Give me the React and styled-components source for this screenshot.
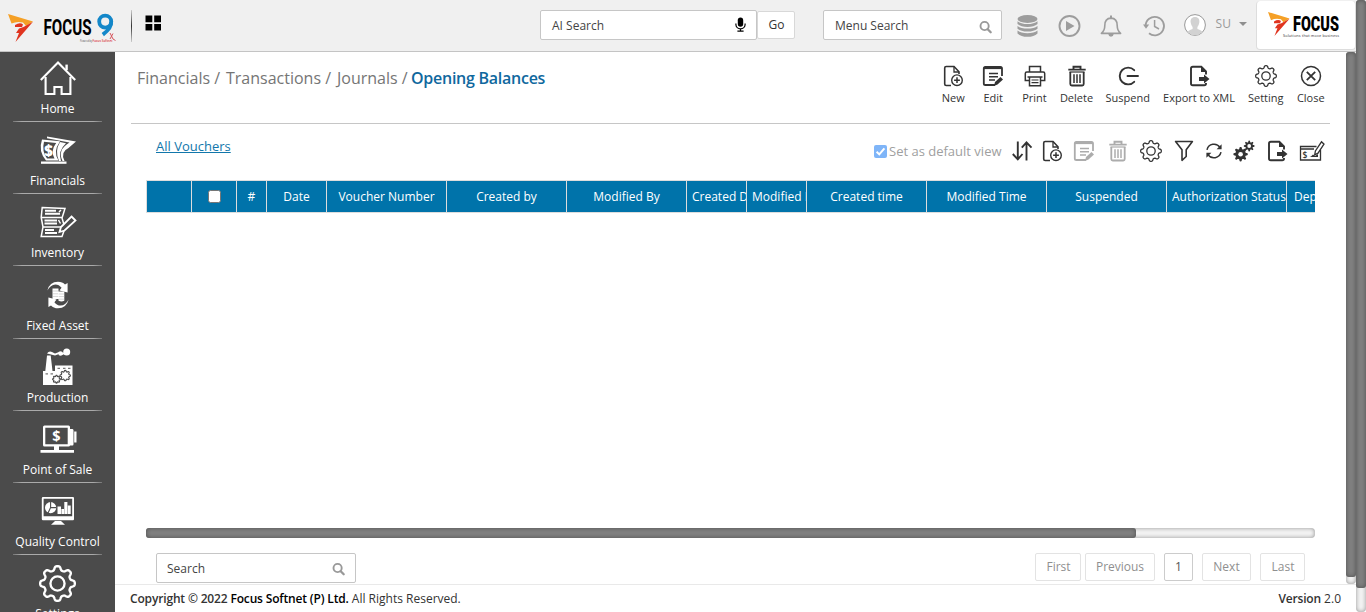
import React from "react";
import styled, { createGlobalStyle, css } from "styled-components";

const GlobalStyle = createGlobalStyle`
  *, *::before, *::after { box-sizing: border-box; }
  html, body { margin: 0; height: 100%; overflow: hidden; }
  body { font-family: "Open Sans", sans-serif; font-size: 12px; color: #333; background: #fff; }
  svg { display: block; overflow: visible; }
`;

/* ---------- icons ---------- */

const Icon = ({ w = 22, h = 22, children, ...rest }) => (
  <svg width={w} height={h} viewBox={`0 0 ${w} ${h}`} fill="none" stroke="currentColor" strokeWidth="1.6" {...rest}>
    {children}
  </svg>
);

/* Closed wavy outline with rounded teeth, sampled around the circle. */
const gearPath = (cx, cy, outer, inner, teeth, sharpness = 1.8) => {
  const mid = (outer + inner) / 2;
  const amp = (outer - inner) / 2 / Math.tanh(sharpness);
  const pts = [];
  for (let i = 0; i < 160; i++) {
    const a = (i * 2 * Math.PI) / 160;
    const r = mid + amp * Math.tanh(sharpness * Math.cos(teeth * a));
    pts.push(`${(cx + r * Math.sin(a)).toFixed(2)} ${(cy - r * Math.cos(a)).toFixed(2)}`);
  }
  return `M${pts.join("L")}Z`;
};

const NewIcon = () => (
  <Icon>
    <path d="M9 20.5H4.2Q2.7 20.5 2.7 19V3Q2.7 1.5 4.2 1.5H12L17 6.8V9" />
    <path d="M12 1.8V7H17" strokeWidth="1.3" />
    <circle cx="15" cy="15.2" r="5.3" strokeWidth="1.4" />
    <path d="M15 12.3V18.1M12.1 15.2H17.9" strokeWidth="1.5" />
  </Icon>
);
const EditIcon = () => (
  <Icon>
    <path d="M13 20H3.4Q1.8 20 1.8 18.4V3.4Q1.8 1.8 3.4 1.8H18.4Q20 1.8 20 3.4V11" strokeWidth="1.8" />
    <path d="M1.8 3H20" strokeWidth="2.2" />
    <path d="M7 8.4H16M7 11.7H16M7 15H13" strokeWidth="1.5" />
    <path d="M13 17L18.5 12L21 14.4L15.5 19.6L12 21Z" fill="currentColor" stroke="none" />
  </Icon>
);
const PrintIcon = () => (
  <Icon strokeWidth="1.5">
    <path d="M5.5 7V1.5H16.5V7M5.5 15.5H1.3V8.5Q1.3 7 2.8 7H19.2Q20.7 7 20.7 8.5V15.5H16.5" />
    <path d="M5.5 12H16.5V20.7H5.5ZM3.5 12H18.5" />
    <path d="M7.5 15H14.5M7.5 17.7H14.5" strokeWidth="1.2" />
  </Icon>
);
const TrashIcon = () => (
  <Icon>
    <path d="M2.3 4.6H19.7M7.5 4V1.8H14.5V4" strokeWidth="1.9" />
    <path d="M4.3 7V19Q4.3 20.5 5.8 20.5H16.2Q17.7 20.5 17.7 19V7" strokeWidth="1.8" />
    <path d="M3.5 7H18.5" strokeWidth="1.2" />
    <path d="M8 9.2V18M11 9.2V18M14 9.2V18" strokeWidth="1.5" />
  </Icon>
);
const SuspendIcon = () => (
  <Icon>
    <path d="M17.2 5.2A8.4 8.4 0 1 0 17.2 16.8M10.5 11H21" strokeWidth="1.9" strokeLinecap="round" />
  </Icon>
);
const ExportIcon = () => (
  <Icon strokeWidth="1.9">
    <path d="M18 9.5V6.3L13.3 1.7H4.8Q3 1.7 3 3.5V18.5Q3 20.3 4.8 20.3H16.2Q18 20.3 18 18.5V18" />
    <path d="M13 1.5L18.5 7H13Z" fill="currentColor" stroke="none" />
    <path d="M11 12H16V9.6L21.5 14L16 18.4V16H11Z" fill="currentColor" stroke="none" />
  </Icon>
);
const GearIcon = ({ size = 22, sw = 1.3 }) => (
  <svg width={size} height={size} viewBox="0 0 22 22" fill="none" stroke="currentColor" strokeWidth={sw} strokeLinejoin="round">
    <path d={gearPath(11, 11, 10.3, 8, 8)} />
    <circle cx="11" cy="11" r="4.2" />
  </svg>
);
const CloseIcon = () => (
  <Icon>
    <circle cx="11" cy="11" r="9.5" strokeWidth="1.5" />
    <path d="M6.8 6.8L15.2 15.2M15.2 6.8L6.8 15.2" strokeWidth="1.8" />
  </Icon>
);
const SortIcon = () => (
  <Icon strokeWidth="1.9">
    <path d="M6.8 1.5V19M1.8 14L6.8 19.4L11.5 14M15.5 20.5V3M10.8 7.6L15.5 2.4L20.5 7.6" />
  </Icon>
);
const FilterIcon = () => (
  <Icon strokeWidth="1.6" strokeLinejoin="round">
    <path d="M2.6 1.5H19.4L13.2 9.8V16.5L9 20.3V9.8Z" />
  </Icon>
);
const RefreshIcon = () => (
  <Icon strokeWidth="1.5">
    <path d="M4 9.8A7.2 7.2 0 0 1 17 7.4M18 12.2A7.2 7.2 0 0 1 5 14.6" />
    <path d="M18.6 4.2V9.2H13.6ZM3.4 17.8V12.8H8.4Z" fill="currentColor" stroke="none" />
  </Icon>
);
const GearsIcon = () => (
  <Icon stroke="none">
    <path d={gearPath(7.6, 14.2, 7.2, 5.2, 8)} fill="currentColor" />
    <circle cx="7.6" cy="14.2" r="2.3" fill="#fff" />
    <path d={gearPath(16.2, 6, 5.4, 3.8, 8)} fill="currentColor" />
    <circle cx="16.2" cy="6" r="1.9" fill="#fff" />
  </Icon>
);
const ChequeIcon = () => (
  <Icon w={26} strokeWidth="1.3">
    <path d="M17.5 6.5H1.5V20H21.5V10M1.5 9H15" />
    <path d="M22.5 1.8L25 4.2L19 13.2L15.7 14.8L16.4 11Z" strokeWidth="1.3" />
    <path d="M12 16.4L14 14.5L16 16L19 14V17H10.5Z" fill="currentColor" stroke="none" />
    <text x="3.6" y="18.2" fontSize="8.5" fontWeight="600" fill="currentColor" stroke="none">$</text>
  </Icon>
);
const SearchIcon = () => (
  <Icon w={13} h={13}>
    <circle cx="5.6" cy="5" r="4.1" strokeWidth="1.9" />
    <path d="M8.7 8.2L11.7 11.2" strokeWidth="2.3" strokeLinecap="round" />
  </Icon>
);
const MicIcon = () => (
  <Icon w={11} h={15}>
    <rect x="2.8" y="-0.4" width="5.4" height="9.2" rx="2.7" fill="#000" stroke="none" />
    <path d="M0.9 5.4V6.6A4.6 4.3 0 0 0 10.1 6.6V5.4M5.5 11V13M2.4 13.2H8.6" stroke="#000" strokeWidth="1.2" />
  </Icon>
);
const TilesIcon = () => (
  <Icon w={16} h={16} stroke="none" fill="#000">
    <path d="M0.5 0.5H7.3V7.2H0.5ZM9.2 0.5H16V7.2H9.2ZM0.5 9H7.3V15.4H0.5ZM9.2 9H16V15.4H9.2Z" />
  </Icon>
);
const DatabaseIcon = () => (
  <Icon w={21} h={22} stroke="none" fill="currentColor">
    <ellipse cx="10.5" cy="4" rx="10" ry="3.9" />
    <path d="M.5 6.2Q4 9 10.5 9T20.5 6.2V9Q17 12 10.5 12T.5 9ZM.5 11Q4 13.6 10.5 13.6T20.5 11V13.8Q17 16.6 10.5 16.6T.5 13.8ZM.5 15.6Q4 18.2 10.5 18.2T20.5 15.6V18.4Q17 21.8 10.5 21.8T.5 18.4Z" />
  </Icon>
);
const PlayIcon = () => (
  <Icon>
    <circle cx="11.5" cy="11" r="10" strokeWidth="1.9" />
    <path d="M8 6L16.5 11L8 16Z" fill="currentColor" stroke="none" />
  </Icon>
);
const BellIcon = () => (
  <Icon>
    <path d="M1.4 18.4Q4.8 15.5 4.8 10.5Q4.8 3.3 11 3.1Q17.2 3.3 17.2 10.5Q17.2 15.5 20.6 18.4Z" strokeWidth="1.6" strokeLinejoin="round" />
    <path d="M10 .5H12V3H10ZM8.3 19H13.7Q13.4 21.7 11 21.7T8.3 19Z" fill="currentColor" stroke="none" />
  </Icon>
);
const HistoryIcon = () => (
  <Icon>
    <path d="M2.6 11A9.2 9.2 0 1 1 6 18.2" strokeWidth="1.8" />
    <path d="M0 9.5H6.2L3 13.8Z" fill="currentColor" stroke="none" />
    <path d="M11.6 5V11.5L16 14" strokeWidth="1.5" />
  </Icon>
);
const AvatarIcon = () => (
  <Icon stroke="none">
    <circle cx="11" cy="11" r="10.4" fill="#fff" stroke="#999" strokeWidth="1" />
    <path d="M11 3C14.4 3 15.8 5.3 15.3 8.6C15 11 14 12.2 13.4 13V15Q18 16.2 18.2 18.2A10 10 0 0 1 3.8 18.2Q4 16.2 8.6 15V13C8 12.2 7 11 6.7 8.6C6.2 5.3 7.6 3 11 3Z" fill="#d2d2d2" />
  </Icon>
);

const FlagMark = () => (
  <>
    <path d="M0 0L25 7.5L18 12L15 8.5Q9 7 3.5 9.5Z" fill="#f5a026" />
    <path d="M7 11Q12 8 15 10.5L14 13H7ZM15.5 13L25 7.8L7.5 28L11 19H8L11 14.5Z" fill="#e0341f" />
  </>
);

const BrandLogo = () => (
  <svg width="108" height="30" viewBox="0 0 108 30">
    <FlagMark />
    <text x="35.5" y="21" textLength="48" lengthAdjust="spacingAndGlyphs" fontFamily="Roboto, sans-serif" fontWeight="700" fontSize="22.5" fill="#000">FOCUS</text>
    <g fill="none" stroke="#1387c9" strokeWidth="3.8">
      <circle cx="97.2" cy="7.6" r="6" />
      <path d="M103.2 7.5Q103.8 14 94.8 20.6" />
    </g>
    <path d="M102 19L105 25L107.5 26.5M105 19.5L102 25" stroke="#d6545c" strokeWidth="1" fill="none" />
    <text x="72" y="27.8" fontSize="3" fill="#444" textLength="12" lengthAdjust="spacingAndGlyphs">Powered by</text>
    <text x="84.5" y="28" fontSize="3.8" fontWeight="600" fill="#d9333f" textLength="20" lengthAdjust="spacingAndGlyphs">Focus Softnet</text>
  </svg>
);
const CompanyLogo = () => (
  <svg width="72" height="26" viewBox="0 0 72 26">
    <g transform="scale(.86 .86)"><FlagMark /></g>
    <text x="25" y="19.4" textLength="46" lengthAdjust="spacingAndGlyphs" fontFamily="Roboto, sans-serif" fontWeight="900" fontSize="21" fill="#000">FOCUS</text>
    <text x="15" y="24.8" fontSize="3.8" fill="#333" textLength="56" lengthAdjust="spacing">Solutions that move business</text>
  </svg>
);

const HomeIcon = () => (
  <Icon w={36} h={34} strokeWidth="2.1">
    <path d="M.8 19L18 1.6L35.2 19" />
    <path d="M26.6 9V3.6" strokeWidth="2.4" />
    <path d="M5.6 16V33H14.4V26H21.6V33H30.4V16" />
  </Icon>
);
const FinancialsIcon = () => (
  <Icon w={36} h={34} stroke="none" fill="currentColor">
    <path d="M2 6.5L20 8.2Q12.5 19 18.5 27.5H6Q-2 18 2 6.5ZM4 8.8Q1.6 18 7 25.6H14.5Q10.3 17.5 16.2 10Z" fillRule="evenodd" />
    <path d="M1 28.5H26.5V30.8H1Z" />
    <path d="M7 3.5L36 8.5L28.5 15Q20 19 24.5 28H22.5Q17 17 29.5 9.6L7 5.2Z" />
    <path d="M20 9L26 10.2Q17.5 18 21 28H19Q14.5 18 20 9Z" />
    <text x="4.2" y="22.6" fontSize="15" fontWeight="800">$</text>
  </Icon>
);
const InventoryIcon = () => (
  <Icon w={36} h={34} strokeWidth="1.5">
    <path d="M2.2 2.5L25 3.5L22 13L25 23L22 31.5H1.2L3 22L1.2 12.5ZM1.2 12.5H22M3 22H22" />
    <path d="M5 5.8H16M5 8.8H20M4.5 15.5H17M4.5 18.5H17M5 25H14M5 28H17" strokeWidth="2" />
    <path d="M31.5 11.5L35.5 15.5L24.5 25.5L19.5 27L21 22Z" fill="#4b4b4b" strokeWidth="1.8" />
    <path d="M19 7L21 5M18.5 15L20.5 18.5" />
  </Icon>
);
const FixedAssetIcon = () => (
  <Icon w={24} h={28} stroke="none" fill="currentColor">
    <path d="M1.4 9.5Q3.5 .8 12 .8Q16.5 .8 19 3.6L21.6 2V11.6L13.4 9.4L15.6 6.8Q13 3.4 9.4 3.4Q4.4 3.6 1.4 9.5Z" />
    <path d="M22.6 18.5Q20.5 27.2 12 27.2Q7.5 27.2 5 24.4L2.4 26V16.4L10.6 18.6L8.4 21.2Q11 24.6 14.6 24.6Q19.6 24.4 22.6 18.5Z" />
    <path d="M6.5 7.5H12.5V10.5H18.3V19.8Q15.5 21.4 12.5 19.8V18H6.5Z" />
    <path d="M6.5 10H12M6.5 12.8H12M6.5 15.4H12M12.6 13H18.3M12.6 15.6H18.3M12.6 18.2H18.3" stroke="#a8a8a8" strokeWidth=".5" />
  </Icon>
);
const ProductionIcon = () => (
  <Icon w={30} h={38} stroke="none" fill="currentColor">
    <path d="M0 37V23H2.3L4 7.5H7.7L9.5 23H12V17.5H29.5V37Z" />
    <path d="M4 5.5Q6 2.5 9 4L12 5.5L16 4L20 4.5L21.5 5.2L20 7L16 6L12 7.5L8 6.5Z" />
    <circle cx="23.7" cy="4" r="3.5" />
    <circle cx="17.5" cy="5.5" r="2.2" />
    <path d="M14.5 20.3H17M20 20.3H22.5M25 20.3H27.5M2.5 25.8H5M7.5 25.8H10" stroke="#777" strokeWidth="1.2" />
    <g fill="none" stroke="#4b4b4b" strokeWidth="1.1">
      <path d={gearPath(22.2, 27.6, 5.2, 3.9, 8)} />
      <path d={gearPath(13.5, 31.2, 3.9, 2.9, 8)} />
    </g>
  </Icon>
);
const PosIcon = () => (
  <Icon w={36} h={28} stroke="none" fill="currentColor">
    <path d="M4.5 .5Q3 .5 3 2V20Q3 21.5 4.5 21.5H14V25H.5V27.8H34V25H19V21.5H28.5Q30 21.5 30 20V2Q30 .5 28.5 .5ZM5.3 2.7H27.7V19.3H5.3Z" fillRule="evenodd" />
    <path d="M29 4H32.5Q33.5 4 33.5 5.5V19Q33.5 20.5 32.5 20.5H29ZM34.2 6.5H36.5V17.5H34.2Z" />
    <text x="12.2" y="16.4" fontSize="14.5" fontWeight="700">$</text>
  </Icon>
);
const QualityIcon = () => (
  <Icon w={34} h={28} stroke="none" fill="currentColor">
    <path d="M2 0H32Q33 0 33 1.3V22Q33 23.2 32 23.2H2Q.8 23.2 .8 22V1.3Q.8 0 2 0ZM2.6 1.8V19.3H31.2V1.8Z" fillRule="evenodd" />
    <path d="M14 24H20L24 27.8H10Z" />
    <circle cx="9.6" cy="10.6" r="5.6" />
    <path d="M9.6 5V10.6H15.4M9.6 10.6L7 16" stroke="#4b4b4b" strokeWidth="1.1" fill="none" />
    <path d="M16.5 9.5H20V17H16.5ZM20.4 12H23V17H20.4ZM23.3 5H26.4V17H23.3ZM26.8 8.5H29.7V17H26.8Z" />
  </Icon>
);

/* ---------- frame ---------- */

const Frame = styled.div`
  display: flex;
  width: 1366px;
  height: 612px;
  overflow: hidden;
`;
const Shell = styled.div`
  display: flex;
  flex-direction: column;
  width: 1356px;
`;
const Track = styled.div`
  flex: none;
  border-radius: 4px;
  background: #f2f2f2;
  box-shadow: inset 0 0 4px rgba(0, 0, 0, 0.4);
  ${(p) => (p.$horizontal
    ? css`width: 1169px; height: 10px; margin-left: 31px;`
    : css`width: 10px; height: 100%;`)}
`;
const Thumb = styled.div`
  border-radius: 3px;
  background: #828282;
  box-shadow: inset 0 0 5px rgba(0, 0, 0, 0.4);
  ${(p) => (p.$horizontal
    ? css`width: ${p.$size}px; height: 10px;`
    : css`width: 10px; height: ${p.$size}px;`)}
`;

/* ---------- top bar ---------- */

const TopBar = styled.header`
  display: flex;
  align-items: flex-start;
  flex: none;
  height: 52px;
  background: #f0f0f0;
  border-bottom: 1px solid #c4c4c4;
`;
const BrandArea = styled.div`
  display: flex;
  width: 540px;
  padding: 14px 0 0 8px;
`;
const Divider = styled.div`
  width: 1px;
  height: 32px;
  margin: -4px 13px 0 15px;
  background: linear-gradient(#ccc, #333 50%, #ccc);
`;
const TilesButton = styled.div`
  padding-top: 1px;
`;
const SearchBox = styled.label`
  display: flex;
  align-items: center;
  justify-content: space-between;
  width: ${(p) => p.$width}px;
  height: 30px;
  padding: 0 ${(p) => p.$right || 10}px 0 ${(p) => p.$left || 10}px;
  border: 1px solid #c6c6c6;
  border-radius: 2px;
  background: #fff;
  color: #444;
  font-size: 12px;
  margin-top: ${(p) => p.$top || 0}px;
`;
const SearchGlyph = styled.span`
  color: #999;
  padding-top: ${(p) => p.$drop || 0}px;
`;
const GoButton = styled.div`
  width: 38px;
  height: 28px;
  margin: 11px 28px 0 0;
  padding-left: 1px;
  border: 1px solid #d8d8d8;
  border-radius: 2px;
  background: #fff;
  text-align: center;
  line-height: 26px;
  color: #333;
`;
const TopIcons = styled.div`
  display: flex;
  align-items: center;
  gap: 20.2px;
  height: 52px;
  padding-left: 15px;
  color: #9d9d9d;
`;
const User = styled.div`
  display: flex;
  align-items: center;
  height: 50px;
  margin-left: 19px;
  color: #8a8a8a;
`;
const UserName = styled.span`
  margin: -3px 8px 0 10px;
  font-size: 12px;
  color: #999;
`;
const Caret = styled.span`
  border: 4px solid transparent;
  border-top-color: #8f8f8f;
  border-bottom: 0;
  margin-top: -2px;
`;
const LogoCard = styled.div`
  width: 100px;
  height: 49px;
  margin: 1px 0 0 auto;
  padding: 11px 0 0 11px;
  border: 1px solid #ddd;
  border-top: 0;
  border-radius: 4px;
  background: #fff;
`;

/* ---------- sidebar ---------- */

const Body = styled.div`
  display: flex;
  height: 560px;
`;
const Sidebar = styled.nav`
  flex: none;
  width: 115px;
  height: 560px;
  overflow: hidden;
  background: #4b4b4b;
  color: #fff;
`;
const NavItem = styled.div`
  height: 72.2px;
  display: flex;
  flex-direction: column;
  align-items: center;
`;
const NavIcon = styled.div`
  display: flex;
  align-items: center;
  justify-content: center;
  height: 38px;
  margin-top: 7px;
`;
const NavLabel = styled.div`
  height: 17px;
  margin-top: 3px;
  font-size: 12px;
  line-height: 17px;
  white-space: nowrap;
`;
const NavRule = styled.div`
  width: 89px;
  height: 1px;
  margin-top: 4px;
  background: linear-gradient(90deg, #777, #aaa 10%, #aaa 90%, #777);
`;

/* ---------- workspace ---------- */

const Content = styled.div`
  display: flex;
  flex-direction: column;
  width: 1241px;
`;
const Viewport = styled.div`
  display: flex;
  height: 532px;
`;
const Workspace = styled.main`
  width: 1231px;
`;
const PageHead = styled.div`
  display: flex;
  justify-content: space-between;
  height: 72px;
  margin: 0 16px;
  border-bottom: 1px solid #c6c6c6;
`;
const Crumbs = styled.div`
  display: flex;
  padding: 15px 0 0 6px;
  font-size: 16px;
  line-height: 22px;
  color: #757575;
  white-space: nowrap;
`;
const Crumb = styled.span`
  width: ${(p) => p.$width}px;
`;
const CurrentCrumb = styled.span`
  color: #0f689e;
  font-weight: 600;
  letter-spacing: -0.26px;
`;
const ActionBar = styled.div`
  display: flex;
  padding-top: 13px;
  margin-right: -0.5px;
`;
const Action = styled.div`
  display: flex;
  flex-direction: column;
  align-items: center;
  width: ${(p) => p.$width}px;
  color: #333;
  font-size: 11px;
  line-height: 16px;
  white-space: nowrap;
  opacity: ${(p) => (p.$muted ? 0.4 : 1)};
`;
const ActionLabel = styled.span`
  margin-top: 3px;
`;
const ListHead = styled.div`
  display: flex;
  justify-content: space-between;
  height: 56px;
  padding: 0 15px 0 41px;
`;
const ViewLink = styled.a`
  padding-top: 13px;
  font-size: 13px;
  line-height: 18px;
  color: #1277ab;
  text-decoration: underline;
`;
const ListTools = styled.div`
  display: flex;
  padding-top: 16px;
`;
const DefaultView = styled.label`
  display: flex;
  width: 133px;
  color: #a0a0a0;
  font-size: 13px;
  line-height: 22px;
  white-space: nowrap;
`;
const CheckMark = styled.span`
  width: 13px;
  height: 13px;
  margin: 5px 2px 0 0;
  border-radius: 2px;
  background: #7fb5f8;
`;
const Table = styled.div`
  display: flex;
  width: 1169px;
  height: 33px;
  margin-left: 31px;
  overflow: hidden;
  border: 1px solid #ddd;
  border-width: 1px 0;
  background: #0073aa;
  color: #fff;
`;
const HeadCell = styled.div`
  flex: none;
  width: ${(p) => p.$width}px;
  padding: 0 0 0 ${(p) => (p.$tight ? 5 : 0)}px;
  border-left: 1px solid #ddd;
  overflow: hidden;
  text-align: ${(p) => (p.$tight ? "left" : "center")};
  font-size: 12px;
  line-height: 31px;
  white-space: nowrap;
`;
const RowCheck = styled.span`
  display: block;
  width: 13px;
  height: 13px;
  margin: 9px auto 0;
  border: 1px solid #767676;
  border-radius: 2.5px;
  background: #fff;
`;
const Rows = styled.div`
  height: 315px;
`;
const ListFoot = styled.div`
  display: flex;
  justify-content: space-between;
  padding: 15px 41px 0 41px;
`;
const Pager = styled.div`
  display: flex;
`;
const PageButton = styled.div`
  width: ${(p) => p.$width}px;
  height: 28px;
  margin-left: ${(p) => p.$gap}px;
  padding-left: ${(p) => p.$shift || 0}px;
  border: 1px solid ${(p) => (p.$current ? "#ccc" : "#e3e3e3")};
  border-radius: 2px;
  text-align: center;
  font-size: 12px;
  line-height: 26px;
  color: ${(p) => (p.$current ? "#555" : "#8f8f8f")};
`;
const Footer = styled.footer`
  display: flex;
  justify-content: space-between;
  height: 28px;
  padding: 0 15px;
  border-top: 1px solid #e9e9e9;
  font-size: 12px;
  line-height: 28px;
  color: #333;
`;
const Strong = styled.span`
  font-weight: 600;
  letter-spacing: -0.16px;
  color: ${(p) => (p.$dark ? "#000" : "#333")};
`;

/* ---------- data ---------- */

const navItems = [
  ["Home", <HomeIcon />],
  ["Financials", <FinancialsIcon />],
  ["Inventory", <InventoryIcon />],
  ["Fixed Asset", <FixedAssetIcon />],
  ["Production", <ProductionIcon />],
  ["Point of Sale", <PosIcon />],
  ["Quality Control", <QualityIcon />],
  ["Settings", <GearIcon size={37} sw={1.4} />],
];
const actions = [
  ["New", 38.5, <NewIcon />],
  ["Edit", 41.5, <EditIcon />],
  ["Print", 41, <PrintIcon />],
  ["Delete", 43, <TrashIcon />],
  ["Suspend", 59.5, <SuspendIcon />],
  ["Export to XML", 83, <ExportIcon />],
  ["Setting", 50.5, <GearIcon />],
  ["Close", 39.5, <CloseIcon />],
];
const tools = [
  [30, <SortIcon />],
  [30, <NewIcon />],
  [34, <EditIcon />, true],
  [33, <TrashIcon />, true],
  [33, <GearIcon />],
  [33, <FilterIcon />],
  [28, <RefreshIcon />],
  [32, <GearsIcon />],
  [33, <ExportIcon />],
  [38, <ChequeIcon />],
];
const columns = [
  ["", 45],
  [<RowCheck />, 45],
  ["#", 30],
  ["Date", 60],
  ["Voucher Number", 120],
  ["Created by", 120],
  ["Modified By", 120],
  ["Created Date", 60, true],
  ["Modified Date", 60, true],
  ["Created time", 120],
  ["Modified Time", 120],
  ["Suspended", 120],
  ["Authorization Status", 120, true],
  ["\u2009Department", 120, true],
];
const pages = [
  { label: "First", width: 46, gap: 0, shift: 1 },
  { label: "Previous", width: 70, gap: 4 },
  { label: "1", width: 29, gap: 9, current: true },
  { label: "Next", width: 49, gap: 9 },
  { label: "Last", width: 45, gap: 9, shift: 1 },
];

export default function App() {
  return (
    <Frame>
      <GlobalStyle />
      <Shell>
        <TopBar>
          <BrandArea>
            <BrandLogo />
            <Divider />
            <TilesButton><TilesIcon /></TilesButton>
          </BrandArea>
          <SearchBox $width={217} $top={10} $left={11}>
            AI Search
            <MicIcon />
          </SearchBox>
          <GoButton>Go</GoButton>
          <SearchBox $width={179} $top={10} $left={11} $right={9}>
            Menu Search
            <SearchGlyph $drop={4}><SearchIcon /></SearchGlyph>
          </SearchBox>
          <TopIcons>
            <DatabaseIcon />
            <PlayIcon />
            <BellIcon />
            <HistoryIcon />
          </TopIcons>
          <User>
            <AvatarIcon />
            <UserName>SU</UserName>
            <Caret />
          </User>
          <LogoCard><CompanyLogo /></LogoCard>
        </TopBar>
        <Body>
          <Sidebar>
            {navItems.map(([label, icon]) => (
              <NavItem key={label}>
                <NavIcon>{icon}</NavIcon>
                <NavLabel>{label}</NavLabel>
                <NavRule />
              </NavItem>
            ))}
          </Sidebar>
          <Content>
            <Viewport>
              <Workspace>
                <PageHead>
                  <Crumbs>
                    <Crumb $width={89}>Financials /</Crumb>
                    <Crumb $width={111}>Transactions /</Crumb>
                    <Crumb $width={74}>Journals /</Crumb>
                    <CurrentCrumb>Opening Balances</CurrentCrumb>
                  </Crumbs>
                  <ActionBar>
                    {actions.map(([label, width, icon]) => (
                      <Action key={label} $width={width}>
                        {icon}
                        <ActionLabel>{label}</ActionLabel>
                      </Action>
                    ))}
                  </ActionBar>
                </PageHead>
                <ListHead>
                  <ViewLink>All Vouchers</ViewLink>
                  <ListTools>
                    <DefaultView>
                      <CheckMark>
                        <svg width="13" height="13" viewBox="0 0 13 13" fill="none" stroke="#fff" strokeWidth="2">
                          <path d="M2.6 6.8L5.3 9.4L10.4 3.4" />
                        </svg>
                      </CheckMark>
                      Set as default view
                    </DefaultView>
                    {tools.map(([width, icon, muted], i) => (
                      <Action key={i} $width={width} $muted={muted}>{icon}</Action>
                    ))}
                  </ListTools>
                </ListHead>
                <Table>
                  {columns.map(([label, width, tight], i) => (
                    <HeadCell key={i} $width={width} $tight={tight}>{label}</HeadCell>
                  ))}
                </Table>
                <Rows />
                <Track $horizontal><Thumb $horizontal $size={990} /></Track>
                <ListFoot>
                  <SearchBox $width={200}>
                    Search
                    <SearchGlyph $drop={3}><SearchIcon /></SearchGlyph>
                  </SearchBox>
                  <Pager>
                    {pages.map(({ label, width, gap, shift, current }) => (
                      <PageButton key={label} $width={width} $gap={gap} $shift={shift} $current={current}>{label}</PageButton>
                    ))}
                  </Pager>
                </ListFoot>
              </Workspace>
              <Track><Thumb $size={525} /></Track>
            </Viewport>
            <Footer>
              <span>
                <Strong>Copyright © 2022 </Strong>
                <Strong $dark>Focus Softnet (P) Ltd.</Strong> All Rights Reserved.
              </span>
              <span><Strong>Version</Strong> 2.0</span>
            </Footer>
          </Content>
        </Body>
      </Shell>
      <Track><Thumb $size={588} /></Track>
    </Frame>
  );
}
